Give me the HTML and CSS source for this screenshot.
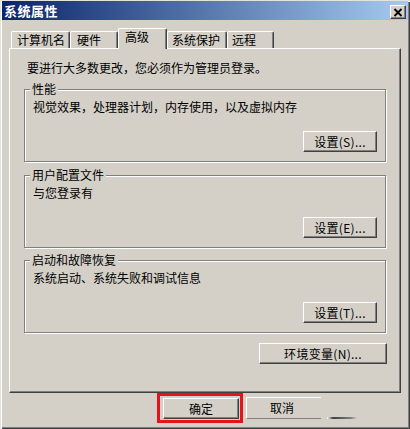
FILE: index.html
```html
<!DOCTYPE html>
<html lang="zh-CN">
<head>
<meta charset="utf-8">
<title>系统属性</title>
<link rel="stylesheet" href="styles.css">
</head>
<body>
<div class="window">
  <div class="titlebar">
    <span class="title">系统属性</span>
    <button class="close" aria-label="关闭">
      <svg width="10" height="9" viewBox="0 0 10 9"><path d="M1.5 1 L8.5 8 M8.5 1 L1.5 8" stroke="#000" stroke-width="1.8" fill="none"/></svg>
    </button>
  </div>
  <div class="tabs">
    <div class="tab tab-name">计算机名</div>
    <div class="tab tab-hw">硬件</div>
    <div class="tab tab-adv active">高级</div>
    <div class="tab tab-prot">系统保护</div>
    <div class="tab tab-remote">远程</div>
  </div>
  <div class="panel">
    <p class="intro">要进行大多数更改，您必须作为管理员登录。</p>
    <div class="group">
      <span class="legend">性能</span>
      <p class="desc">视觉效果，处理器计划，内存使用，以及虚拟内存</p>
      <div class="actions"><button class="btn btn-set">设置(S)...</button></div>
    </div>
    <div class="group">
      <span class="legend">用户配置文件</span>
      <p class="desc">与您登录有</p>
      <div class="actions"><button class="btn btn-set">设置(E)...</button></div>
    </div>
    <div class="group group-last">
      <span class="legend">启动和故障恢复</span>
      <p class="desc">系统启动、系统失败和调试信息</p>
      <div class="actions"><button class="btn btn-set">设置(T)...</button></div>
    </div>
    <div class="env-row"><button class="btn btn-env">环境变量(N)...</button></div>
  </div>
  <div class="footer">
    <div class="ok-wrap"><button class="btn btn-ok">确定</button></div>
    <button class="btn btn-cancel">取消</button>
    <span class="glitch"></span>
  </div>
</div>
</body>
</html>
```
FILE: styles.css
```css
* { box-sizing: border-box; }
html, body { margin: 0; padding: 0; }
body {
  width: 410px;
  height: 429px;
  overflow: hidden;
  background: #d4d0c8;
  font-family: "Noto Sans CJK SC", "Liberation Sans", sans-serif;
  font-size: 12px;
  line-height: 16px;
  color: #000;
}
p { margin: 0; }

.window {
  width: 410px;
  height: 429px;
  background: #d4d0c8;
  padding: 1px 2px 2px 2px;
  box-shadow: inset 1px 1px #e4e2dc, inset 2px 2px #fff, inset -1px -1px #404040, inset -2px -2px #808080;
  display: flex;
  flex-direction: column;
}

.titlebar {
  height: 19px;
  display: flex;
  align-items: center;
  justify-content: space-between;
  padding: 0 2px 0 2px;
  background: linear-gradient(to right, #0a246a, #a6caf0);
}
.title {
  color: #fff;
  font-weight: bold;
  font-size: 13px;
  letter-spacing: 0.5px;
}
.close {
  width: 16px;
  height: 14px;
  padding: 0;
  margin-top: 3px;
  display: flex;
  align-items: center;
  justify-content: center;
  background: #d4d0c8;
  border: 1px solid;
  border-color: #fff #404040 #404040 #fff;
  box-shadow: inset -1px -1px #808080;
}

.tabs {
  display: flex;
  align-items: flex-end;
  height: 28px;
  padding-left: 9px;
}
.tab {
  height: 17px;
  padding-left: 5px;
  border-top: 1px solid #fff;
  border-left: 1px solid #fff;
  border-right: 1px solid #404040;
  box-shadow: inset -1px 0 #808080;
  border-radius: 2px 2px 0 0;
  white-space: nowrap;
  background: #d4d0c8;
}
.tab-name { width: 59px; }
.tab-hw { width: 48px; padding-left: 6px; }
.tab-adv { width: 49px; padding-left: 6px; }
.tab-prot { width: 60px; padding-left: 4px; }
.tab-remote { width: 47px; padding-left: 4px; }
.tab.active {
  height: 21px;
  margin-bottom: -1px;
  position: relative;
  z-index: 1;
}

.panel {
  margin-left: 7px;
  width: 392px;
  height: 345px;
  border-top: 1px solid #fff;
  border-left: 1px solid #fff;
  border-right: 1px solid #404040;
  border-bottom: 1px solid #404040;
  box-shadow: inset -1px -1px #808080;
  padding: 11px 0 0 14px;
}
.intro { margin-left: 3px; height: 16px; }

.group {
  position: relative;
  width: 362px;
  height: 73px;
  margin-top: 13px;
  border: 1px solid #808080;
  box-shadow: inset 1px 1px #fff, 1px 1px #fff;
  padding: 9px 8px 0 8px;
}
.group-last { margin-top: 12px; }
.legend {
  position: absolute;
  top: -9px;
  left: 5px;
  padding: 0 2px;
  background: #d4d0c8;
  white-space: nowrap;
}
.desc { height: 16px; white-space: nowrap; }
.actions {
  display: flex;
  justify-content: flex-end;
  margin-top: 16px;
}

.btn {
  height: 21px;
  padding: 0;
  background: #d4d0c8;
  border: 1px solid;
  border-color: #fff #404040 #404040 #fff;
  box-shadow: inset -1px -1px #808080;
  font-family: inherit;
  font-size: 12px;
  line-height: 16px;
  color: #000;
  white-space: nowrap;
}
.btn-set { width: 74px; letter-spacing: 0.3px; }
.env-row {
  display: flex;
  justify-content: flex-end;
  margin-top: 10px;
  padding-right: 13px;
}
.btn-env { width: 128px; letter-spacing: 0.3px; }

.footer {
  display: flex;
  align-items: flex-start;
  margin-top: 5px;
  padding-left: 161px;
}
.ok-wrap { position: relative; }
.ok-wrap::after {
  content: "";
  position: absolute;
  left: -6px;
  top: -5px;
  right: -4px;
  bottom: -4px;
  border: 3px solid #e3141b;
}
.btn-ok { width: 76px; display: block; }
.btn-cancel {
  width: 75px;
  margin-left: 7px;
  margin-top: -1px;
  height: 22px;
  text-align: left;
  padding-left: 23px;
  border-right: none;
  box-shadow: none;
  border-bottom-color: #808080;
}
.glitch {
  width: 30px;
  height: 2px;
  margin-top: 19px;
  margin-left: 6px;
  background: linear-gradient(to right, #fff, #404040 20%, #808080 80%, #d4d0c8);
}
```
